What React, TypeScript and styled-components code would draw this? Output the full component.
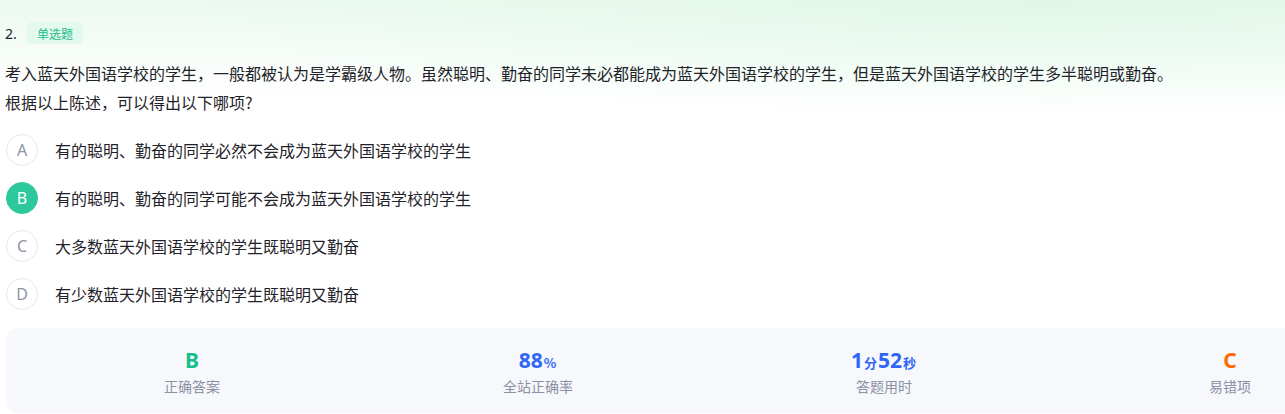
import React from "react";
import styled, { createGlobalStyle } from "styled-components";

const GlobalStyle = createGlobalStyle`
  html, body {
    margin: 0;
    padding: 0;
    background: #ffffff;
    overflow: hidden;
  }
  body {
    font-family: "Noto Sans", "Noto Sans CJK SC", sans-serif;
  }
`;

const Page = styled.div`
  width: 1285px;
  height: 414px;
  box-sizing: border-box;
  padding: 22px 0 0 5px;
  background:
    radial-gradient(ellipse 900px 120px at 1050px 0px, rgba(214, 246, 226, 0.55), rgba(255, 255, 255, 0) 100%),
    linear-gradient(180deg, #ecf9f0 0px, #f5fcf7 45px, #ffffff 100px);
  overflow: hidden;
`;

const Header = styled.div`
  display: flex;
  align-items: center;
  height: 22px;
`;

const Number = styled.span`
  font-size: 14px;
  color: #1f2329;
  width: 22px;
`;

const Tag = styled.span`
  display: inline-flex;
  align-items: center;
  height: 22px;
  padding: 0 10px;
  border-radius: 4px;
  background: #e4f9ee;
  color: #1bbf8a;
  font-family: "Noto Sans CJK SC", sans-serif;
  font-size: 12px;
`;

const Question = styled.div`
  margin-top: 15px;
  font-family: "Noto Sans CJK SC", sans-serif;
  font-size: 16px;
  line-height: 29px;
  color: #1f2329;
`;

const Options = styled.div`
  display: flex;
  flex-direction: column;
  gap: 16px;
  margin-top: 17px;
  padding-left: 1px;
`;

const OptionRow = styled.div`
  display: flex;
  align-items: center;
  height: 32px;
  gap: 17px;
`;

const Circle = styled.span<{ $active?: boolean }>`
  box-sizing: border-box;
  width: 32px;
  height: 32px;
  border-radius: 50%;
  display: flex;
  align-items: center;
  justify-content: center;
  font-size: 16px;
  border: 1px solid ${(p) => (p.$active ? "#2ec89d" : "#e3e7ef")};
  background: ${(p) => (p.$active ? "#2ec89d" : "#ffffff")};
  color: ${(p) => (p.$active ? "#ffffff" : "#8c94a6")};
  flex: none;
`;

const OptionText = styled.span`
  font-family: "Noto Sans CJK SC", sans-serif;
  font-size: 16px;
  color: #1f2329;
`;

const Stats = styled.div`
  margin-top: 18px;
  margin-left: 1px;
  width: 1410px;
  height: 85px;
  box-sizing: border-box;
  padding: 18px 13px 17px;
  background: #f7f8fc;
  border-radius: 12px;
  display: grid;
  grid-template-columns: repeat(4, 346px);
`;

const Stat = styled.div`
  display: flex;
  flex-direction: column;
  align-items: center;
`;

const Value = styled.div<{ $color: string }>`
  height: 28px;
  line-height: 28px;
  font-family: "Noto Sans", sans-serif;
  font-weight: 700;
  font-size: 21px;
  color: ${(p) => p.$color};
  display: flex;
  align-items: baseline;
`;

const Unit = styled.span`
  font-family: "Noto Sans CJK SC", sans-serif;
  font-size: 13px;
  font-weight: 700;
  margin: 0 1px;
`;

const Label = styled.div`
  margin-top: 2px;
  line-height: 20px;
  font-family: "Noto Sans CJK SC", sans-serif;
  font-size: 14px;
  color: #8a91a3;
`;

const options = [
  { key: "A", text: "有的聪明、勤奋的同学必然不会成为蓝天外国语学校的学生" },
  { key: "B", text: "有的聪明、勤奋的同学可能不会成为蓝天外国语学校的学生", active: true },
  { key: "C", text: "大多数蓝天外国语学校的学生既聪明又勤奋" },
  { key: "D", text: "有少数蓝天外国语学校的学生既聪明又勤奋" },
];

export default function App() {
  return (
    <>
      <GlobalStyle />
      <Page>
        <Header>
          <Number>2.</Number>
          <Tag>单选题</Tag>
        </Header>
        <Question>
          考入蓝天外国语学校的学生，一般都被认为是学霸级人物。虽然聪明、勤奋的同学未必都能成为蓝天外国语学校的学生，但是蓝天外国语学校的学生多半聪明或勤奋。
          <br />
          根据以上陈述，可以得出以下哪项?
        </Question>
        <Options>
          {options.map((o) => (
            <OptionRow key={o.key}>
              <Circle $active={o.active}>{o.key}</Circle>
              <OptionText>{o.text}</OptionText>
            </OptionRow>
          ))}
        </Options>
        <Stats>
          <Stat>
            <Value $color="#12c08c">B</Value>
            <Label>正确答案</Label>
          </Stat>
          <Stat>
            <Value $color="#2f66f6">
              88<Unit>%</Unit>
            </Value>
            <Label>全站正确率</Label>
          </Stat>
          <Stat>
            <Value $color="#2f66f6">
              1<Unit>分</Unit>52<Unit>秒</Unit>
            </Value>
            <Label>答题用时</Label>
          </Stat>
          <Stat>
            <Value $color="#ff6a00">C</Value>
            <Label>易错项</Label>
          </Stat>
        </Stats>
      </Page>
    </>
  );
}
